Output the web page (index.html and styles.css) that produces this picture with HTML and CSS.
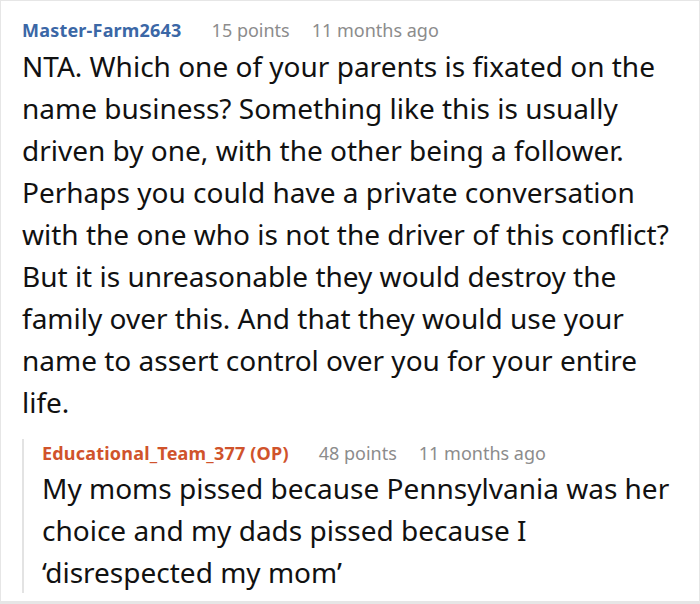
FILE: index.html
```html
<!DOCTYPE html>
<html>
<head>
<meta charset="utf-8">
<link rel="stylesheet" href="styles.css">
</head>
<body>
<div class="frame">
  <div class="comment">
    <div class="meta">
      <span class="user">Master-Farm2643</span>
      <span class="info">15 points</span>
      <span class="info">11 months ago</span>
    </div>
    <p class="text">NTA. Which one of your parents is fixated on the name business? Something like this is usually driven by one, with the other being a follower. Perhaps you could have a private conversation with the one who is not the driver of this conflict? But it is unreasonable they would destroy the family over this. And that they would use your name to assert control over you for your entire life.</p>
    <div class="reply">
      <div class="meta">
        <span class="user op">Educational_Team_377 (OP)</span>
        <span class="info">48 points</span>
        <span class="info">11 months ago</span>
      </div>
      <p class="text">My moms pissed because Pennsylvania was her choice and my dads pissed because I ‘disrespected my mom’</p>
    </div>
  </div>
</div>
</body>
</html>
```
FILE: styles.css
```css
html, body {
  margin: 0;
  padding: 0;
  background: #ffffff;
}
.frame {
  box-sizing: border-box;
  width: 700px;
  height: 604px;
  border: 1px solid #e6e6e6;
  border-bottom: 3px solid #e6e6e6;
  overflow: hidden;
  font-family: "Noto Sans", "Open Sans", sans-serif;
  color: #111111;
}
.comment {
  padding: 15px 24px 0 21px;
}
.meta {
  display: flex;
  align-items: baseline;
  gap: 0 30px;
  font-size: 18px;
  line-height: 28px;
  margin-bottom: 1px;
}
.user {
  font-weight: 700;
  letter-spacing: 0.2px;
  color: #3b67a6;
}
.user.op {
  color: #d0532b;
}
.info {
  color: #8c8c8c;
}
.info + .info {
  margin-left: -8px;
}
.text {
  margin: 0;
  font-size: 28px;
  line-height: 42px;
}
.reply {
  margin-top: 29px;
  border-left: 2px solid #e3e3e3;
  padding-left: 18px;
}
.reply .meta {
  margin-top: -13px;
  margin-bottom: 0;
}
.reply .text {
  margin-bottom: -8px;
}
```
